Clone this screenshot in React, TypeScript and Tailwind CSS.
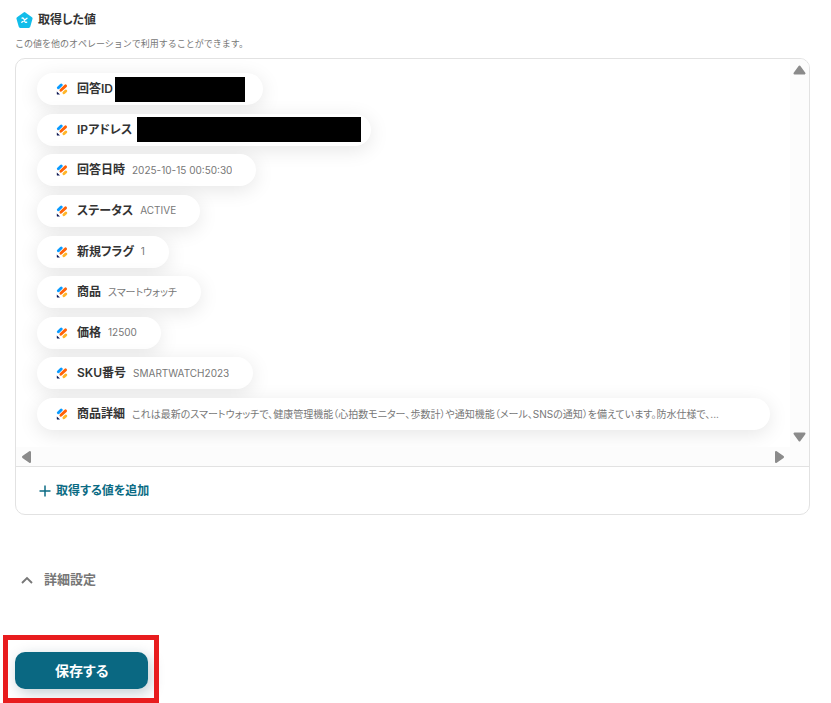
import React, { useState } from 'react';

interface OutputValue {
  label: string;
  value?: string;
  // 伏せ字の幅
  mask?: string;
  // 横幅いっぱいに広げる
  wide?: boolean;
}

const outputValues: OutputValue[] = [
  { label: '回答ID', mask: 'w-[130px] ml-[2px] -mr-[6px]' },
  { label: 'IPアドレス', mask: 'w-[224px] ml-[5px] -mr-[14px]' },
  { label: '回答日時', value: '2025-10-15 00:50:30' },
  { label: 'ステータス', value: 'ACTIVE' },
  { label: '新規フラグ', value: '1' },
  { label: '商品', value: 'スマートウォッチ' },
  { label: '価格', value: '12500' },
  { label: 'SKU番号', value: 'SMARTWATCH2023' },
  {
    label: '商品詳細',
    value:
      'これは最新のスマートウォッチで、健康管理機能（心拍数モニター、歩数計）や通知機能（メール、SNSの通知）を備えています。防水仕様で、...',
    wide: true,
  },
];

const ServiceIcon: React.FC = () => (
  <svg className="size-3 shrink-0" viewBox="0 0 12 12" aria-hidden="true">
    <g strokeWidth="2.9" strokeLinecap="round">
      <path d="M2.4 4.7 L5.2 2" stroke="#0a9bff" />
      <path d="M4.9 7.3 L9.6 2.9" stroke="#ff6108" />
      <path d="M7.9 9.8 L9.8 8" stroke="#ffb629" />
    </g>
    <path d="M0.8 8.4 L4 11.6 H1.5 Q0.8 11.6 0.8 10.9 Z" fill="#0b1551" />
  </svg>
);

const VariableIcon: React.FC = () => (
  <svg className="size-[18px] shrink-0" viewBox="0 0 18 18" aria-hidden="true">
    <path
      d="M9.5 2.6 L16.1 7.4 L13.8 15.4 H5.2 L2.9 7.4 Z"
      fill="#12bdea"
      stroke="#12bdea"
      strokeWidth="3"
      strokeLinejoin="round"
    />
    <path
      d="M7.1 7.2 Q8.3 6.6 8.9 7.9 L9.8 10.5 Q10.4 11.8 11.7 11.1 M12 7.2 L6.8 11.3"
      fill="none"
      stroke="#fff"
      strokeWidth="1.3"
      strokeLinecap="round"
    />
  </svg>
);

const Arrow: React.FC<{ className: string }> = ({ className }) => (
  <svg className={`block h-[10px] w-[13px] ${className}`} viewBox="0 0 13 10" aria-hidden="true">
    <path d="M6.5 1.6 L11.4 8.4 H1.6 Z" fill="#8b8b8b" stroke="#8b8b8b" strokeWidth="2.2" strokeLinejoin="round" />
  </svg>
);

const ValueChip: React.FC<{ item: OutputValue }> = ({ item }) => (
  <li
    className={`flex h-8 max-w-full items-center rounded-full bg-white pr-6 pl-[19px] whitespace-nowrap shadow-[0_4px_20px_rgba(0,0,0,0.1)] ${item.wide ? 'w-full' : ''}`}
  >
    <ServiceIcon />
    <span className="ml-[9px] text-xs font-semibold text-[#333]">{item.label}</span>
    {item.mask ? (
      <span className={`h-[25px] shrink-0 bg-black ${item.mask}`} />
    ) : (
      <span className="ml-[7px] truncate text-[10px] text-[#777]">{item.value}</span>
    )}
  </li>
);

const App: React.FC = () => {
  const [isDetailOpen, setIsDetailOpen] = useState<boolean>(true);

  return (
    <main className="bg-white pt-[11px] pr-[21px] pb-[14px] pl-[15px] font-['Inter','Noto_Sans_CJK_JP',sans-serif] text-[#333] [font-feature-settings:'palt']">
      <header>
        <h2 className="flex h-[18px] items-center gap-[5px] text-xs font-semibold">
          <VariableIcon />
          取得した値
        </h2>
        <p className="mt-[7px] text-[9px] leading-[15px] text-[#777] [font-feature-settings:normal]">
          この値を他のオペレーションで利用することができます。
        </p>
      </header>

      <section className="mt-[7px] overflow-hidden rounded-[10px] border border-[#e2e2e2]">
        <div className="flex">
          <div className="min-w-0 flex-1 overflow-hidden pt-[14px] pr-5 pb-[17px] pl-[21px]">
            <ul className="flex h-[357px] flex-col items-start justify-between">
              {outputValues.map((item) => (
                <ValueChip key={item.label} item={item} />
              ))}
            </ul>
          </div>
          {/* 縦スクロールバー */}
          <div className="flex w-[19px] shrink-0 flex-col items-center justify-between bg-[#fcfcfc] pt-[6px] pb-[5px]">
            <Arrow className="" />
            <Arrow className="rotate-180" />
          </div>
        </div>
        {/* 横スクロールバー */}
        <div className="flex h-[19px] items-center justify-between bg-[#fcfcfc] pr-[23px] pl-1">
          <Arrow className="-rotate-90" />
          <Arrow className="rotate-90" />
        </div>
        <div className="flex h-12 items-center border-t border-[#e2e2e2] pl-[23px]">
          <button type="button" className="flex items-center gap-[5px] text-xs font-semibold text-[#0b6b84]">
            <svg className="size-3" viewBox="0 0 12 12" aria-hidden="true">
              <path d="M6 0.5 V11.5 M0.5 6 H11.5" stroke="currentColor" strokeWidth="1.5" />
            </svg>
            取得する値を追加
          </button>
        </div>
      </section>

      <button
        type="button"
        aria-expanded={isDetailOpen}
        onClick={() => setIsDetailOpen(!isDetailOpen)}
        className="mt-[55px] ml-[6px] flex h-5 items-center gap-[11px] text-[13px] font-bold text-[#777]"
      >
        <svg className={`size-3 ${isDetailOpen ? '' : 'rotate-180'}`} viewBox="0 0 12 12" aria-hidden="true">
          <path d="M1 9 L6 4 L11 9" fill="none" stroke="currentColor" strokeWidth="1.9" />
        </svg>
        詳細設定
      </button>

      <div className="relative mt-[62px] w-fit">
        <button
          type="button"
          className="block h-[37px] rounded-[10px] bg-[#0a6882] px-10 text-sm font-bold text-white shadow-[3px_4px_14px_rgba(10,60,80,0.25)]"
        >
          保存する
        </button>
        <span className="pointer-events-none absolute -top-[17px] -right-[11px] -bottom-[14px] -left-3 border-[5px] border-[#e81c1e]" />
      </div>
    </main>
  );
};

export default App;
